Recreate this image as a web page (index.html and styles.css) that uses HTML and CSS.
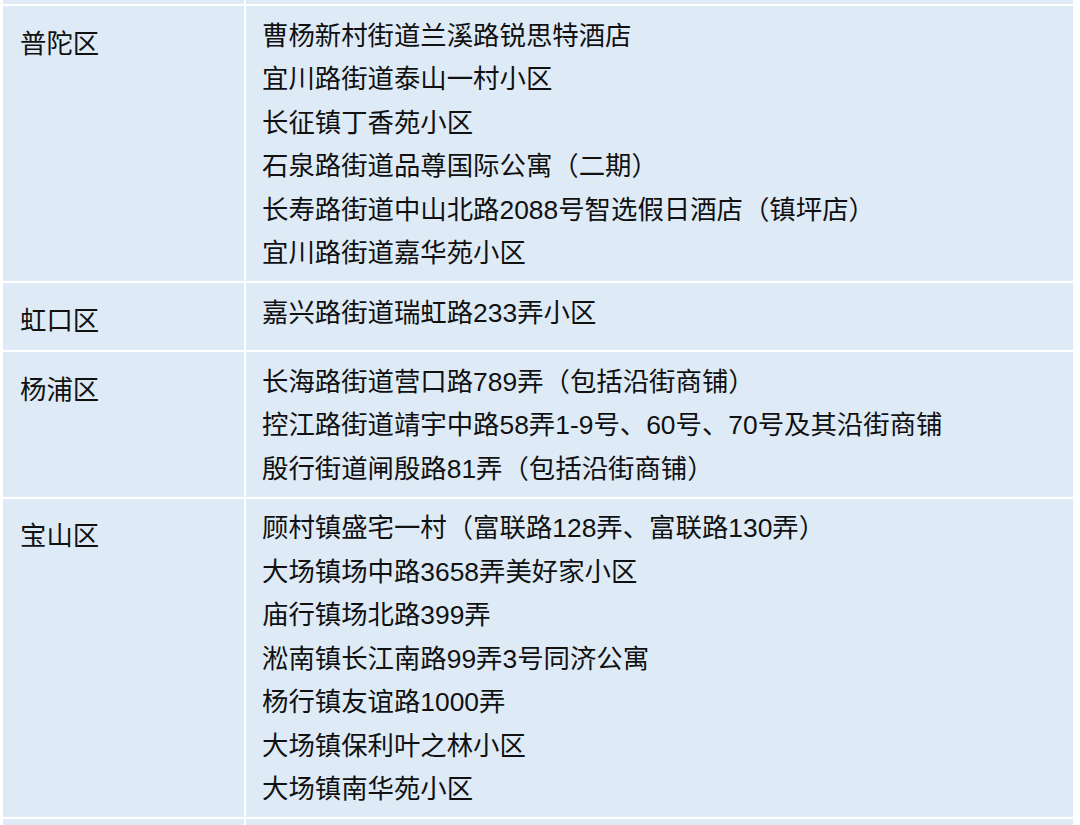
FILE: index.html
```html
<!DOCTYPE html>
<html lang="zh-CN">
<head>
<meta charset="utf-8">
<title>名单</title>
<link rel="stylesheet" href="styles.css">
</head>
<body>
<div class="wrap">
  <div class="grid">
    <div class="cell edge-top"></div>
    <div class="cell edge-top"></div>

    <div class="cell district">普陀区</div>
    <div class="cell places">
      <div>曹杨新村街道兰溪路锐思特酒店</div>
      <div>宜川路街道泰山一村小区</div>
      <div>长征镇丁香苑小区</div>
      <div>石泉路街道品尊国际公寓（二期）</div>
      <div>长寿路街道中山北路2088号智选假日酒店（镇坪店）</div>
      <div>宜川路街道嘉华苑小区</div>
    </div>

    <div class="cell district">虹口区</div>
    <div class="cell places">
      <div>嘉兴路街道瑞虹路233弄小区</div>
    </div>

    <div class="cell district">杨浦区</div>
    <div class="cell places">
      <div>长海路街道营口路789弄（包括沿街商铺）</div>
      <div>控江路街道靖宇中路58弄1-9号、60号、70号及其沿街商铺</div>
      <div>殷行街道闸殷路81弄（包括沿街商铺）</div>
    </div>

    <div class="cell district">宝山区</div>
    <div class="cell places">
      <div>顾村镇盛宅一村（富联路128弄、富联路130弄）</div>
      <div>大场镇场中路3658弄美好家小区</div>
      <div>庙行镇场北路399弄</div>
      <div>淞南镇长江南路99弄3号同济公寓</div>
      <div>杨行镇友谊路1000弄</div>
      <div>大场镇保利叶之林小区</div>
      <div>大场镇南华苑小区</div>
    </div>

    <div class="cell edge-bottom"></div>
    <div class="cell edge-bottom"></div>
  </div>
</div>
</body>
</html>
```

FILE: styles.css
```css
html, body {
  margin: 0;
  padding: 0;
  background: #ffffff;
  overflow: hidden;
}

.wrap {
  width: 1080px;
  height: 825px;
  padding-left: 3px;
  box-sizing: border-box;
  overflow: hidden;
}

.grid {
  width: 1070px;
  display: grid;
  grid-template-columns: 241px 1fr;
  gap: 2px;
  background: #ffffff;
  font-family: "Liberation Sans", "Noto Sans CJK SC", sans-serif;
  font-size: 26.4px;
  line-height: 43.5px;
  color: #111111;
}

.cell {
  background: #deebf7;
}

.edge-top {
  height: 4px;
}

.edge-bottom {
  height: 20px;
}

.district {
  padding: 16.5px 10px 7px 17px;
}

.places {
  padding: 8.5px 10px 5.5px 16px;
}
```
